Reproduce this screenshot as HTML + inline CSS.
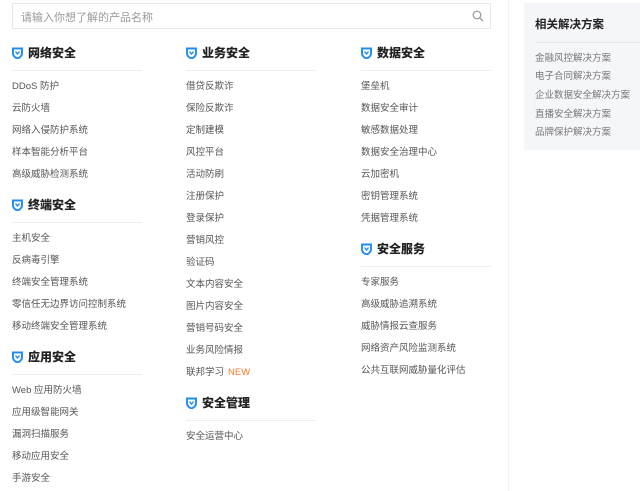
<!DOCTYPE html>
<html><head><meta charset="utf-8"><style>
*{margin:0;padding:0;box-sizing:border-box}
body{width:640px;height:491px;background:#fff;font-family:"Liberation Sans","Noto Sans CJK SC",sans-serif;position:relative;overflow:hidden;color:#333}
.s{position:absolute;left:12px;top:3px;width:479px;height:26px;border:1px solid #e8e8e8;background:#fff}
.s span{position:absolute;left:8px;top:5px;font-size:11px;color:#999}
.vl{position:absolute;left:508px;top:0;width:1px;height:491px;background:#f3f3f3}
.rp{position:absolute;left:524px;top:3px;width:116px;height:147px;background:#f5f6f9}
.rp h4{position:absolute;left:11px;top:13px;font-size:11.5px;color:#222;font-weight:bold}
.rp .ln{position:absolute;left:11px;top:39px;width:105px;height:1px;background:#e6e6e6}
.rp div.i{position:absolute;left:11px;font-size:9.5px;color:#777;white-space:nowrap}
.h{position:absolute;font-size:12px;font-weight:bold;color:#222;white-space:nowrap;height:16px;line-height:16px}
.h svg{position:absolute;left:0;top:2px}
.h b{position:absolute;left:16px;top:0}
.u{position:absolute;height:1px;width:130px;background:#eee}
.it{position:absolute;font-size:9.5px;color:#555;white-space:nowrap;line-height:12px}
.new{color:#f5792a;margin-left:4px}
</style></head><body>
<div class="s"><span>请输入你想了解的产品名称</span>
<svg style="position:absolute;left:459px;top:6px" width="12" height="12" viewBox="0 0 12 12"><circle cx="5" cy="5" r="3.8" fill="none" stroke="#999" stroke-width="1.2"/><path d="M8 8l3 3" stroke="#999" stroke-width="1.3"/></svg></div>
<div class="vl"></div>
<div class="rp"><h4>相关解决方案</h4><div class="ln"></div>
<div class="i" style="top:47px">金融风控解决方案</div>
<div class="i" style="top:65px">电子合同解决方案</div>
<div class="i" style="top:84px">企业数据安全解决方案</div>
<div class="i" style="top:103px">直播安全解决方案</div>
<div class="i" style="top:121px">品牌保护解决方案</div></div>
<div id="c"></div>
<script>
var sh='<svg width="11" height="12" viewBox="0 0 11 12"><path d="M1 1.5h9v5c0 2.5-2 4-4.5 5C3 10.5 1 9 1 6.5z" fill="none" stroke="#1e8cf0" stroke-width="1.9"/><path d="M3.5 4.5l2 2.5 2-2.5" fill="none" stroke="#1e8cf0" stroke-width="1.4"/></svg>';
var cols=[[12,[["网络安全",53,["DDoS 防护","云防火墙","网络入侵防护系统","样本智能分析平台","高级威胁检测系统"]],["终端安全",205,["主机安全","反病毒引擎","终端安全管理系统","零信任无边界访问控制系统","移动终端安全管理系统"]],["应用安全",357,["Web 应用防火墙","应用级智能网关","漏洞扫描服务","移动应用安全","手游安全"]]]],
[186,[["业务安全",53,["借贷反欺诈","保险反欺诈","定制建模","风控平台","活动防刷","注册保护","登录保护","营销风控","验证码","文本内容安全","图片内容安全","营销号码安全","业务风险情报","联邦学习<span class=new>NEW</span>"]],["安全管理",403,["安全运营中心"]]]],
[361,[["数据安全",53,["堡垒机","数据安全审计","敏感数据处理","数据安全治理中心","云加密机","密钥管理系统","凭据管理系统"]],["安全服务",249,["专家服务","高级威胁追溯系统","威胁情报云查服务","网络资产风险监测系统","公共互联网威胁量化评估"]]]]];
var h='';
cols.forEach(function(c){var x=c[0];c[1].forEach(function(g){var y=g[1];
h+='<div class="h" style="left:'+x+'px;top:'+(y-8)+'px">'+sh+'<b>'+g[0]+'</b></div>';
h+='<div class="u" style="left:'+x+'px;top:'+(y+17)+'px"></div>';
g[2].forEach(function(t,i){h+='<div class="it" style="left:'+x+'px;top:'+(y+32+22*i-4)+'px">'+t+'</div>';});});});
document.getElementById('c').innerHTML=h;
</script>
</body></html>
